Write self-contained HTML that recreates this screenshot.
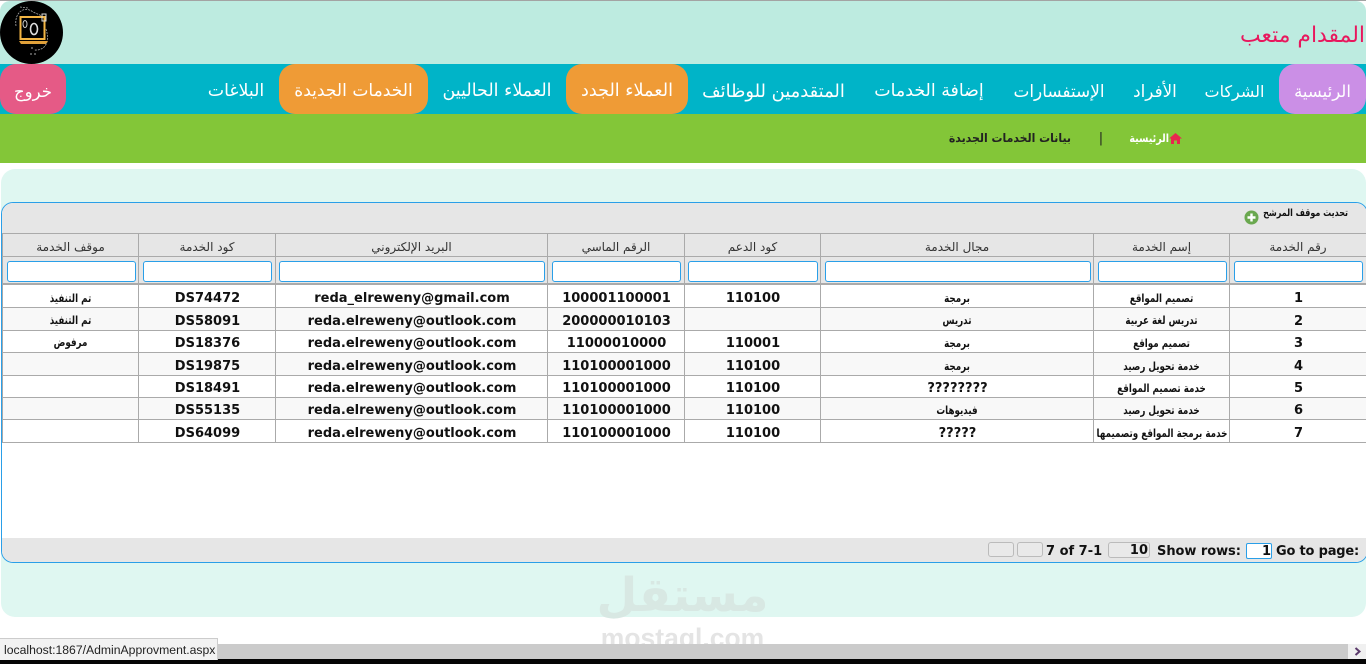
<!DOCTYPE html>
<html lang="ar"><head><meta charset="utf-8"><title>بيانات الخدمات الجديدة</title>
<style>
*{box-sizing:border-box}
html,body{margin:0;padding:0;width:1366px;height:664px;overflow:hidden;background:#fff;font-family:"DejaVu Sans",sans-serif}
.a{position:absolute}
#r{position:relative;width:1366px;height:664px;overflow:hidden}
.nav{position:absolute;top:64px;height:50px;color:#fff;font-size:17.2px;line-height:55px;text-align:center;white-space:nowrap;direction:rtl;font-family:"DejaVu Sans",sans-serif}
.pill{border-radius:16px}
.v{position:absolute;width:1px;background:#aaa}
.h{position:absolute;left:2px;width:1364px;height:1px;background:#aaa}
.th{position:absolute;top:234px;height:23px;line-height:26px;text-align:center;font-size:12px;color:#333;direction:rtl;font-family:"DejaVu Sans",sans-serif}
.in{position:absolute;top:261px;height:21px;background:#fff;border:1px solid #2a9fe8;border-radius:3px}
.c{position:absolute;text-align:center;white-space:nowrap;color:#111}
.b{font-weight:bold;font-size:13px;margin-top:1px;padding-left:1px;font-family:"DejaVu Sans",sans-serif}
.s{font-weight:bold;font-size:11.5px;margin-top:1px;direction:rtl;transform:scaleX(.76);font-family:"DejaVu Sans",sans-serif}
.pg{position:absolute;font-weight:bold;font-size:13px;color:#111;white-space:nowrap;top:544px;line-height:16px}
.btn{position:absolute;background:#e9e9e9;border:1px solid #bbb;border-radius:3px}
</style></head><body><div id="r">

<!-- top bar -->
<div class="a" style="left:0;top:0;width:1366px;height:1px;background:#a3a3a3"></div>
<div class="a" style="left:0;top:1px;width:1366px;height:70px;background:#bdebe0;border-radius:10px 10px 0 0"></div>
<div class="a" style="left:1100px;top:20px;width:265px;height:32px;text-align:right;color:#e8175d;font-size:21.9px;line-height:32px">المقدام متعب</div>

<!-- logo -->
<svg class="a" style="left:0;top:1px" width="63" height="63" viewBox="0 0 63 63">
<circle cx="31.5" cy="31.5" r="31.5" fill="#000"/>
<path d="M16 25C14 12 24 4 33 11C37 13 41 14 43 16M46 28C50 40 46 50 34 49M20 6L28 7" fill="none" stroke="#a8a8a8" stroke-width=".8" stroke-dasharray="2 1"/>
<rect x="20.5" y="16" width="24" height="22" fill="none" stroke="#f2b544" stroke-width="2"/>
<path d="M19 40H48L46 43H21Z" fill="#e0a03a"/>
<ellipse cx="25" cy="23" rx="2" ry="3.5" fill="none" stroke="#ccc" stroke-width="1"/>
<ellipse cx="34" cy="28" rx="3.5" ry="5.5" fill="none" stroke="#ddd" stroke-width="1.6"/>
<rect x="42" y="13" width="4" height="7" fill="none" stroke="#ddd" stroke-width="1"/>
<path d="M30 53h2M34 53h2M31 47h2" stroke="#aaa" stroke-width="1"/>
</svg>

<!-- nav -->
<div class="a" style="left:0;top:64px;width:1366px;height:50px;background:#00b4c8"></div>
<div class="nav pill" style="left:1279px;width:87px;background:#cb8fe6;font-size:16.5px">الرئيسية</div>
<div class="nav" style="left:1191px;width:87px;font-size:16px">الشركات</div>
<div class="nav" style="left:1119px;width:72px;font-size:16.8px">الأفراد</div>
<div class="nav" style="left:999px;width:120px;font-size:16.9px">الإستفسارات</div>
<div class="nav" style="left:859px;width:140px;font-size:17.4px">إضافة الخدمات</div>
<div class="nav" style="left:688px;width:171px;font-size:17.9px">المتقدمين للوظائف</div>
<div class="nav pill" style="left:566px;width:122px;background:#ef9b36;font-size:17.6px">العملاء الجدد</div>
<div class="nav" style="left:428px;width:138px;font-size:17.5px">العملاء الحاليين</div>
<div class="nav pill" style="left:279px;width:149px;background:#ef9b36;font-size:17.1px">الخدمات الجديدة</div>
<div class="nav" style="left:193px;width:86px;font-size:17.4px">البلاغات</div>
<div class="nav pill" style="left:0;width:66px;background:#e55a86;font-size:16.5px">خروج</div>

<!-- breadcrumb -->
<div class="a" style="left:0;top:114px;width:1366px;height:49px;background:#83c638"></div>
<svg class="a" style="left:1169px;top:133px" width="13" height="11" viewBox="0 0 13 11"><path d="M6.5 0L13 5.5H11V11H8V7.5H5V11H2V5.5H0Z" fill="#e8264f"/></svg>
<div class="a" style="left:1100px;top:129px;width:69px;height:18px;line-height:18px;text-align:right;direction:rtl;color:#fff;font-size:11.5px;font-weight:bold;transform-origin:right center;transform:scaleX(.83)">الرئيسية</div>
<div class="a" style="left:1098px;top:130px;width:6px;height:18px;line-height:17px;text-align:center;color:#222;font-size:13px">|</div>
<div class="a" style="left:900px;top:129px;width:171px;height:18px;line-height:18px;text-align:right;direction:rtl;color:#222;font-size:12px;font-weight:bold;white-space:nowrap;transform-origin:right center;transform:scaleX(.91)">بيانات الخدمات الجديدة</div>

<!-- content panel -->
<div class="a" style="left:1px;top:169px;width:1365px;height:448px;background:#dff7f1;border-radius:14px"></div>

<!-- watermark part -->
<div class="a" style="left:590px;top:557px;width:185px;height:78px;line-height:78px;text-align:center;font-size:47px;font-weight:bold;color:#d8e8e3;direction:rtl;white-space:nowrap;font-family:'DejaVu Sans',sans-serif">مستقل</div>
<div class="a" style="left:580px;top:625px;width:205px;height:26px;line-height:26px;text-align:center;font-size:26.5px;font-weight:bold;color:#e4e4e4;font-family:'Liberation Sans',sans-serif">mostaql.com</div>

<!-- grid -->
<div class="a" style="left:1px;top:202px;width:1367px;height:361px;background:#fff;border:1px solid #2a9fe8;border-radius:12px;overflow:hidden">
  <div class="a" style="left:0;top:0;width:1367px;height:32px;background:#e6e6e6"></div>
  <div class="a" style="left:0;top:32px;width:1367px;height:50px;background:#e6e6e6"></div>
  <div class="a" style="left:0;top:335px;width:1367px;height:25px;background:#e6e6e6"></div>
</div>
<div class="a" style="left:1150px;top:206px;width:198px;height:16px;line-height:16px;text-align:right;direction:rtl;font-size:10px;font-weight:bold;color:#111;white-space:nowrap;transform-origin:right center;transform:scaleX(.8)">تحديث موقف المرشح</div>
<svg class="a" style="left:1244px;top:210px" width="15" height="15" viewBox="0 0 15 15"><circle cx="7.5" cy="7.5" r="7" fill="#6aa84f"/><path d="M7.5 3.5v8M3.5 7.5h8" stroke="#fff" stroke-width="2.4"/></svg>

<!-- lines -->
<div class="a" style="left:3px;top:308px;width:1363px;height:22px;background:#f8f8f8"></div>
<div class="a" style="left:3px;top:353px;width:1363px;height:22px;background:#f8f8f8"></div>
<div class="a" style="left:3px;top:398px;width:1363px;height:21px;background:#f8f8f8"></div>
<div class="h" style="top:233px"></div><div class="h" style="top:256px"></div>
<div class="h" style="top:283px;height:2px"></div>
<div class="h" style="top:307px"></div><div class="h" style="top:330px"></div><div class="h" style="top:352px"></div><div class="h" style="top:375px"></div><div class="h" style="top:397px"></div><div class="h" style="top:419px"></div><div class="h" style="top:442px"></div>
<div class="v" style="left:2px;top:233px;height:210px"></div>
<div class="v" style="left:138px;top:233px;height:210px"></div>
<div class="v" style="left:275px;top:233px;height:210px"></div>
<div class="v" style="left:547px;top:233px;height:210px"></div>
<div class="v" style="left:684px;top:233px;height:210px"></div>
<div class="v" style="left:820px;top:233px;height:210px"></div>
<div class="v" style="left:1093px;top:233px;height:210px"></div>
<div class="v" style="left:1229px;top:233px;height:210px"></div>

<!-- header -->
<div class="th" style="left:3px;width:135px">موقف الخدمة</div>
<div class="th" style="left:139px;width:136px">كود الخدمة</div>
<div class="th" style="left:276px;width:271px">البريد الإلكتروني</div>
<div class="th" style="left:548px;width:136px">الرقم الماسي</div>
<div class="th" style="left:685px;width:135px">كود الدعم</div>
<div class="th" style="left:821px;width:272px">مجال الخدمة</div>
<div class="th" style="left:1094px;width:135px">إسم الخدمة</div>
<div class="th" style="left:1230px;width:136px">رقم الخدمة</div>

<!-- filters -->
<div class="in" style="left:7px;width:129px"></div>
<div class="in" style="left:143px;width:129px"></div>
<div class="in" style="left:279px;width:266px"></div>
<div class="in" style="left:552px;width:129px"></div>
<div class="in" style="left:688px;width:130px"></div>
<div class="in" style="left:825px;width:266px"></div>
<div class="in" style="left:1098px;width:129px"></div>
<div class="in" style="left:1234px;width:129px"></div>

<!-- rows -->
<div class="c s" style="left:3px;top:288px;width:135px;line-height:18px">تم التنفيذ</div>
<div class="c b" style="left:139px;top:289px;width:136px;line-height:18px">DS74472</div>
<div class="c b" style="left:276px;top:289px;width:271px;line-height:18px">reda_elreweny@gmail.com</div>
<div class="c b" style="left:548px;top:289px;width:136px;line-height:18px">100001100001</div>
<div class="c b" style="left:685px;top:289px;width:135px;line-height:18px">110100</div>
<div class="c s" style="left:821px;top:288px;width:272px;line-height:18px">برمجة</div>
<div class="c s" style="left:1094px;top:288px;width:135px;line-height:18px">تصميم المواقع</div>
<div class="c b" style="left:1230px;top:289px;width:136px;line-height:18px">1</div>

<div class="c s" style="left:3px;top:310px;width:135px;line-height:18px">تم التنفيذ</div>
<div class="c b" style="left:139px;top:312px;width:136px;line-height:18px">DS58091</div>
<div class="c b" style="left:276px;top:312px;width:271px;line-height:18px">reda.elreweny@outlook.com</div>
<div class="c b" style="left:548px;top:312px;width:136px;line-height:18px">200000010103</div>
<div class="c s" style="left:821px;top:310px;width:272px;line-height:18px">تدريس</div>
<div class="c s" style="left:1094px;top:310px;width:135px;line-height:18px">تدريس لغة عربية</div>
<div class="c b" style="left:1230px;top:312px;width:136px;line-height:18px">2</div>

<div class="c s" style="left:3px;top:332px;width:135px;line-height:18px">مرفوض</div>
<div class="c b" style="left:139px;top:334px;width:136px;line-height:18px">DS18376</div>
<div class="c b" style="left:276px;top:334px;width:271px;line-height:18px">reda.elreweny@outlook.com</div>
<div class="c b" style="left:548px;top:334px;width:136px;line-height:18px">11000010000</div>
<div class="c b" style="left:685px;top:334px;width:135px;line-height:18px">110001</div>
<div class="c s" style="left:821px;top:333px;width:272px;line-height:18px">برمجة</div>
<div class="c s" style="left:1094px;top:333px;width:135px;line-height:18px">تصميم مواقع</div>
<div class="c b" style="left:1230px;top:334px;width:136px;line-height:18px">3</div>

<div class="c b" style="left:139px;top:357px;width:136px;line-height:18px">DS19875</div>
<div class="c b" style="left:276px;top:357px;width:271px;line-height:18px">reda.elreweny@outlook.com</div>
<div class="c b" style="left:548px;top:357px;width:136px;line-height:18px">110100001000</div>
<div class="c b" style="left:685px;top:357px;width:135px;line-height:18px">110100</div>
<div class="c s" style="left:821px;top:356px;width:272px;line-height:18px">برمجة</div>
<div class="c s" style="left:1094px;top:356px;width:135px;line-height:18px">خدمة تحويل رصيد</div>
<div class="c b" style="left:1230px;top:357px;width:136px;line-height:18px">4</div>

<div class="c b" style="left:139px;top:379px;width:136px;line-height:18px">DS18491</div>
<div class="c b" style="left:276px;top:379px;width:271px;line-height:18px">reda.elreweny@outlook.com</div>
<div class="c b" style="left:548px;top:379px;width:136px;line-height:18px">110100001000</div>
<div class="c b" style="left:685px;top:379px;width:135px;line-height:18px">110100</div>
<div class="c b" style="left:821px;top:379px;width:272px;line-height:18px">????????</div>
<div class="c s" style="left:1094px;top:378px;width:135px;line-height:18px">خدمة تصميم المواقع</div>
<div class="c b" style="left:1230px;top:379px;width:136px;line-height:18px">5</div>

<div class="c b" style="left:139px;top:401px;width:136px;line-height:18px">DS55135</div>
<div class="c b" style="left:276px;top:401px;width:271px;line-height:18px">reda.elreweny@outlook.com</div>
<div class="c b" style="left:548px;top:401px;width:136px;line-height:18px">110100001000</div>
<div class="c b" style="left:685px;top:401px;width:135px;line-height:18px">110100</div>
<div class="c s" style="left:821px;top:400px;width:272px;line-height:18px">فيديوهات</div>
<div class="c s" style="left:1094px;top:400px;width:135px;line-height:18px">خدمة تحويل رصيد</div>
<div class="c b" style="left:1230px;top:401px;width:136px;line-height:18px">6</div>

<div class="c b" style="left:139px;top:424px;width:136px;line-height:18px">DS64099</div>
<div class="c b" style="left:276px;top:424px;width:271px;line-height:18px">reda.elreweny@outlook.com</div>
<div class="c b" style="left:548px;top:424px;width:136px;line-height:18px">110100001000</div>
<div class="c b" style="left:685px;top:424px;width:135px;line-height:18px">110100</div>
<div class="c b" style="left:821px;top:424px;width:272px;line-height:18px">?????</div>
<div class="c s" style="left:1072px;top:423px;width:180px;line-height:18px">خدمة برمجة المواقع وتصميمها</div>
<div class="c b" style="left:1230px;top:424px;width:136px;line-height:18px">7</div>

<!-- pager -->
<div class="btn" style="left:988px;top:542px;width:26px;height:15px"></div>
<div class="btn" style="left:1017px;top:542px;width:26px;height:15px"></div>
<div class="pg" style="left:1046px">7 of 7-1</div>
<div class="btn" style="left:1108px;top:542px;width:42px;height:16px;text-align:right;padding-right:1px;font-weight:bold;font-size:13px;line-height:16px;color:#111">10</div>
<div class="pg" style="left:1157px;letter-spacing:-.05px">Show rows:</div>
<div class="a" style="left:1246px;top:543px;width:26px;height:16px;background:#fff;border:1px solid #2a9fe8;border-radius:2px;text-align:right;padding-right:0;font-weight:bold;font-size:13px;line-height:15px;color:#111">1</div>
<div class="pg" style="left:1276px;letter-spacing:-.2px">Go to page:</div>

<!-- bottom -->
<div class="a" style="left:0;top:644px;width:1366px;height:15px;background:#cbcbcb"></div>
<div class="a" style="left:1348px;top:644px;width:18px;height:15px;background:#f0f0f0"></div>
<svg class="a" style="left:1354px;top:647px" width="8" height="9" viewBox="0 0 8 9"><path d="M1.5 1L5.5 4.5L1.5 8" fill="none" stroke="#5b3a6b" stroke-width="2"/></svg>
<div class="a" style="left:0;top:659px;width:1366px;height:5px;background:#050505"></div>
<div class="a" style="left:0;top:638px;width:218px;height:22px;background:#f2f2f2;border:1px solid #ccc;border-left:0;border-bottom:0;color:#222;font-size:12.2px;line-height:22px;padding-left:4px;white-space:nowrap;overflow:hidden;font-family:'Liberation Sans',sans-serif">localhost:1867/AdminApprovment.aspx</div>
</div></body></html>
